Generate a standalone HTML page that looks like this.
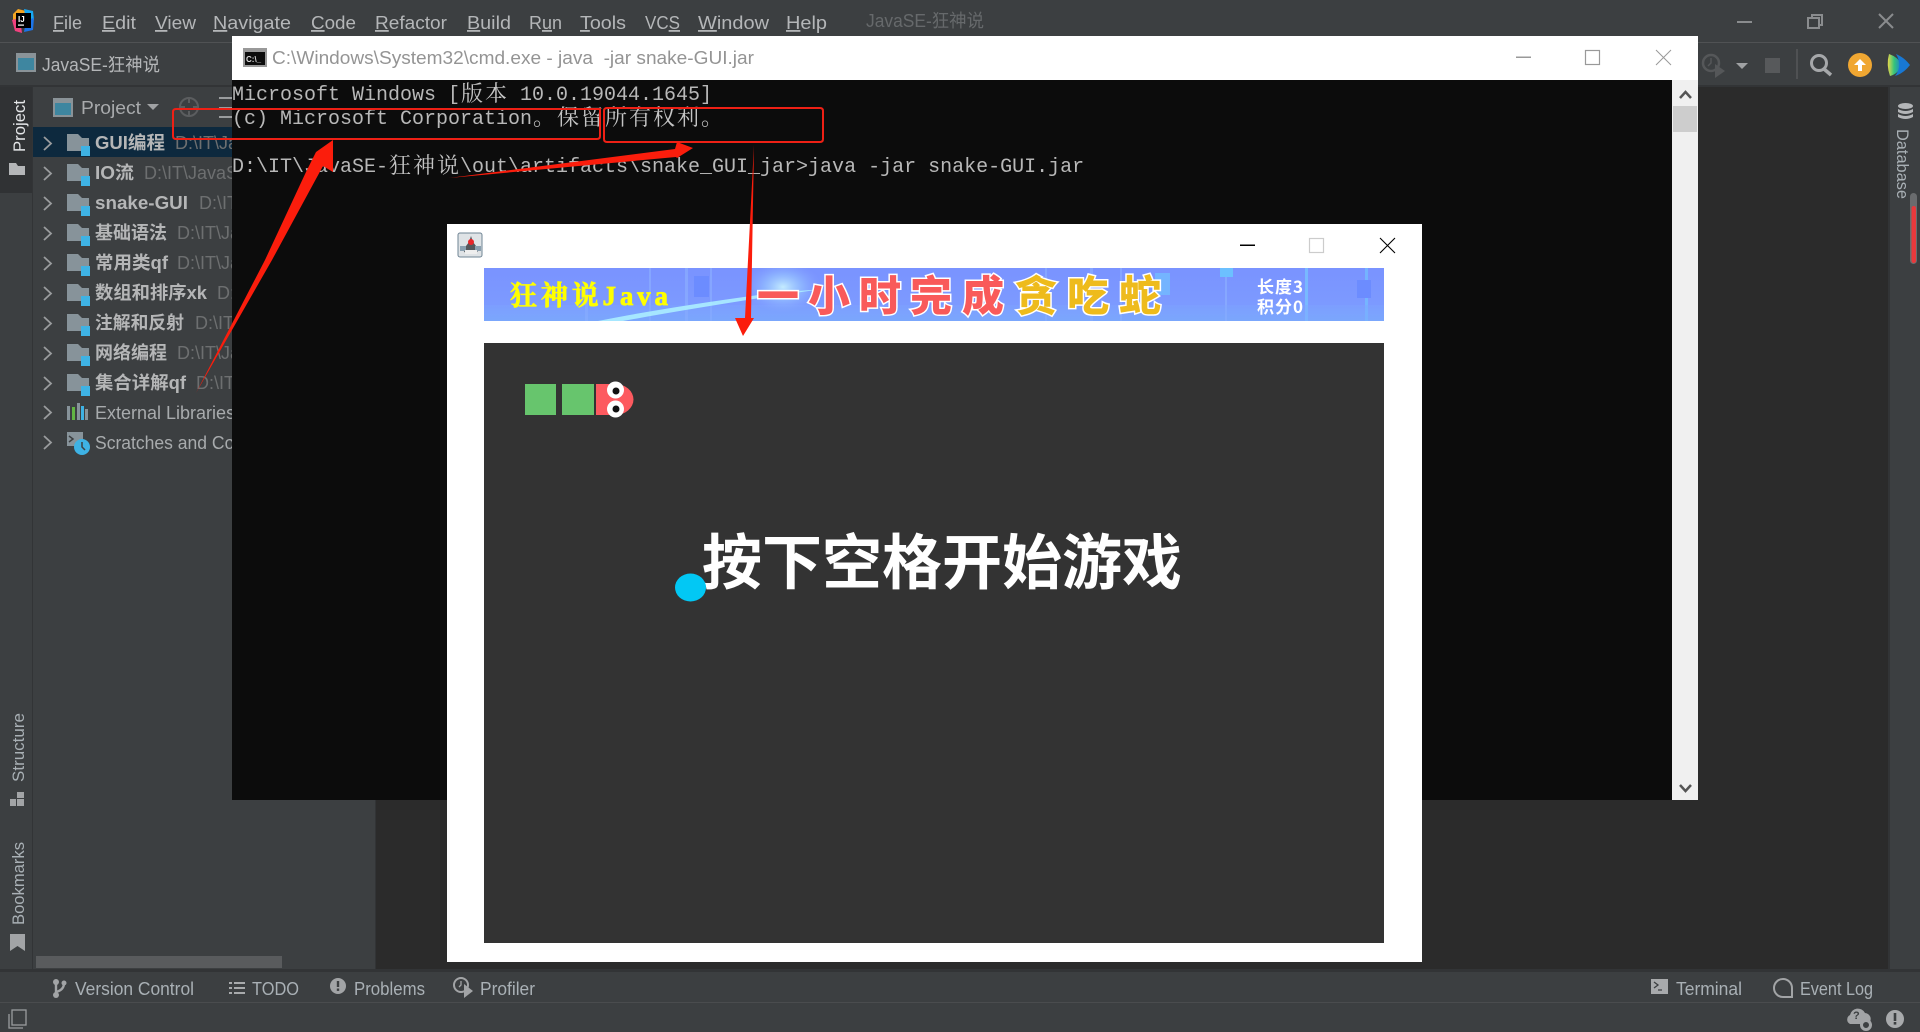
<!DOCTYPE html>
<html><head><meta charset="utf-8"><title>JavaSE</title>
<style>
html,body{margin:0;padding:0;background:#3c3f41;overflow:hidden}
svg{display:block}
text{font-family:"Liberation Sans","Noto Sans CJK SC",sans-serif;white-space:pre}
.m{font-size:18px;fill:#b4b6b8}
.b{font-size:18px;font-weight:700;fill:#b5b6b7}
.p{font-size:18px;fill:#6d6f70}
.t{font-size:18px;fill:#a9b0b5}
.c{font-family:"Liberation Mono","Noto Serif CJK SC",monospace;font-size:20px;fill:#b8b8b8}
.z{font-family:"Noto Serif CJK SC","Liberation Serif",serif;font-size:22px;fill:#c4c4c4}
.y{font-family:"Liberation Serif","Noto Serif CJK SC",serif;font-weight:700;font-size:27px;fill:#ffff00;stroke:#ffff00;stroke-width:.7}
.r{font-family:"Noto Sans CJK SC",sans-serif;font-weight:900;font-size:42px;stroke:#fff;stroke-width:3;paint-order:stroke}
.w{font-family:"Noto Sans CJK SC",sans-serif;font-weight:700;font-size:17px;fill:#fff}
.g{font-family:"Noto Sans CJK SC",sans-serif;font-weight:700;font-size:60px;fill:#fff}
</style></head>
<body>
<svg width="1920" height="1032" viewBox="0 0 1920 1032" xmlns="http://www.w3.org/2000/svg">
<defs>
<g id="f"><path d="M67 -8h11l4 4h7v13H67z" fill="#87939a"/><rect x="81" y="4" width="9" height="10" fill="#3eb2e4"/><path d="M44 -5l7 6.500-7 6.500" fill="none" stroke="#9a9c9e" stroke-width="1.800"/></g>
<g id="pi"><rect x="0" y="0" width="20" height="19" fill="#8a9398"/><rect x="2" y="5" width="16" height="12" fill="#3e86a0"/></g>
<linearGradient id="bn" x1="0" y1="0" x2="0" y2="1"><stop offset="0" stop-color="#7a93ff"/><stop offset=".7" stop-color="#7c9aff"/><stop offset="1" stop-color="#78a8fb"/></linearGradient>
<radialGradient id="gl"><stop offset="0" stop-color="#c8f0ff" stop-opacity=".95"/><stop offset=".5" stop-color="#9fd0ff" stop-opacity=".5"/><stop offset="1" stop-color="#8aa8ff" stop-opacity="0"/></radialGradient>
<linearGradient id="cg" x1="0" y1="0" x2="1" y2="0"><stop offset="0" stop-color="#e8d94a"/><stop offset=".45" stop-color="#35c47a"/><stop offset="1" stop-color="#1678d8"/></linearGradient>
<clipPath id="bc"><rect x="484" y="268" width="900" height="53"/></clipPath>
</defs>

<!-- IDE base -->
<rect width="1920" height="1032" fill="#3c3f41"/>
<rect x="0" y="42" width="1920" height="1" fill="#505254"/>
<rect x="376" y="87" width="1514" height="882" fill="#2b2b2b"/>
<rect x="0" y="85" width="1920" height="2" fill="#323436"/>
<rect x="0" y="87" width="32" height="106" fill="#303234"/>
<rect x="32" y="87" width="1" height="882" fill="#323436"/>
<rect x="375" y="87" width="1" height="882" fill="#323436"/>
<rect x="1888" y="87" width="2" height="882" fill="#323436"/>
<rect x="0" y="969" width="1920" height="3" fill="#323436"/>
<rect x="0" y="1002" width="1920" height="1" fill="#4a4c4e"/>

<!-- Logo -->
<path d="M13 14L18 9 26 11 18 24 13 20z" fill="#f5a623"/>
<path d="M12 20L20 18 22 33 15 31z" fill="#f0417e"/>
<path d="M24 9L33 11 34 20 26 20z" fill="#17a8f3"/>
<path d="M26 20L34 18 33 30 24 32z" fill="#1c74e8"/>
<rect x="16" y="13" width="15" height="15" fill="#000"/>
<text x="18" y="22" style="font-size:8px;font-weight:700;fill:#fff">IJ</text>
<rect x="18" y="24.500" width="6" height="1.200" fill="#fff"/>

<!-- Menu -->
<text class="m" x="53" y="29" textLength="29" lengthAdjust="spacingAndGlyphs"><tspan text-decoration="underline">F</tspan>ile</text>
<text class="m" x="102" y="29" textLength="34" lengthAdjust="spacingAndGlyphs"><tspan text-decoration="underline">E</tspan>dit</text>
<text class="m" x="155" y="29" textLength="41" lengthAdjust="spacingAndGlyphs"><tspan text-decoration="underline">V</tspan>iew</text>
<text class="m" x="213" y="29" textLength="78" lengthAdjust="spacingAndGlyphs"><tspan text-decoration="underline">N</tspan>avigate</text>
<text class="m" x="311" y="29" textLength="45" lengthAdjust="spacingAndGlyphs"><tspan text-decoration="underline">C</tspan>ode</text>
<text class="m" x="375" y="29" textLength="72" lengthAdjust="spacingAndGlyphs"><tspan text-decoration="underline">R</tspan>efactor</text>
<text class="m" x="467" y="29" textLength="44" lengthAdjust="spacingAndGlyphs"><tspan text-decoration="underline">B</tspan>uild</text>
<text class="m" x="529" y="29" textLength="33" lengthAdjust="spacingAndGlyphs">R<tspan text-decoration="underline">u</tspan>n</text>
<text class="m" x="580" y="29" textLength="46" lengthAdjust="spacingAndGlyphs"><tspan text-decoration="underline">T</tspan>ools</text>
<text class="m" x="645" y="29" textLength="35" lengthAdjust="spacingAndGlyphs">VC<tspan text-decoration="underline">S</tspan></text>
<text class="m" x="698" y="29" textLength="71" lengthAdjust="spacingAndGlyphs"><tspan text-decoration="underline">W</tspan>indow</text>
<text class="m" x="786" y="29" textLength="41" lengthAdjust="spacingAndGlyphs"><tspan text-decoration="underline">H</tspan>elp</text>
<text class="m" x="866" y="27" textLength="118" lengthAdjust="spacingAndGlyphs" style="fill:#66696b">JavaSE-狂神说</text>

<!-- Window controls -->
<rect x="1737" y="21" width="15" height="2" fill="#8a8c8e"/>
<path d="M1812 18v-3h10v10h-3M1808 18h11v10h-11z" fill="none" stroke="#8a8c8e" stroke-width="2"/>
<path d="M1879 14l14 14M1893 14l-14 14" stroke="#8a8c8e" stroke-width="2"/>

<!-- Toolbar row -->
<use href="#pi" x="16" y="53"/>
<text class="m" x="42" y="71" textLength="118" lengthAdjust="spacingAndGlyphs">JavaSE-狂神说</text>
<circle cx="1711" cy="63" r="8" fill="none" stroke="#555759" stroke-width="2.500"/>
<path d="M1711 58v5l-3 3" fill="none" stroke="#555759" stroke-width="1.500"/>
<path d="M1715 64l10 7-10 7z" fill="#555759"/>
<path d="M1736 63h12l-6 6z" fill="#a0a2a4"/>
<rect x="1765" y="58" width="15" height="15" fill="#57595b"/>
<rect x="1796" y="49" width="2" height="30" fill="#4f5153"/>
<circle cx="1819" cy="63" r="7.500" fill="none" stroke="#a6a8aa" stroke-width="3"/>
<path d="M1824 69l7 6" stroke="#a6a8aa" stroke-width="3.500"/>
<circle cx="1860" cy="65" r="12" fill="#f0a732"/>
<path d="M1860 59l6 6h-4v6h-4v-6h-4z" fill="#fff"/>
<path d="M1889 54q-3 11 1 22q8-2 12-11q-4-8-13-11z" fill="url(#cg)"/>
<path d="M1896 54q9 4 14 11q-6 8-15 11q8-10 1-22z" fill="#1878d4"/>

<!-- Left rail -->
<text class="t" transform="translate(25,152) rotate(-90)" textLength="52" lengthAdjust="spacingAndGlyphs" style="fill:#e4e6e8;font-size:17px">Project</text>
<path d="M9 163h7l2 3h7v9H9z" fill="#b4b6b8"/>
<text class="t" transform="translate(24,782) rotate(-90)" textLength="69" lengthAdjust="spacingAndGlyphs" style="font-size:17px">Structure</text>
<path d="M10 799h6v7h-6zM17 799h7v7h-7zM17 792h7v6h-7z" fill="#a2a4a6"/>
<text class="t" transform="translate(24,925) rotate(-90)" textLength="83" lengthAdjust="spacingAndGlyphs" style="font-size:17px">Bookmarks</text>
<path d="M10 934h15v17l-7.500-5-7.500 5z" fill="#a2a4a6"/>

<!-- Project panel header -->
<use href="#pi" x="53" y="98"/>
<text class="m" x="81" y="114" textLength="60" lengthAdjust="spacingAndGlyphs" style="fill:#a8aaac">Project</text>
<path d="M147 104h12l-6 6z" fill="#a0a2a4"/>
<circle cx="189" cy="107" r="9" fill="none" stroke="#5b5d5f" stroke-width="2"/>
<path d="M189 97v6M189 111v6M179 107h6M193 107h6" stroke="#5b5d5f" stroke-width="2"/>
<path d="M219 97h13v2h-13zM219 116h13v2h-13zM219 107h13v2h-13z" fill="#9a9c9e"/>

<!-- Tree -->
<rect x="33" y="127" width="343" height="30" fill="#0d293e"/>
<use href="#f" y="142"/><text class="b" x="95" y="149" textLength="70" lengthAdjust="spacingAndGlyphs">GUI编程</text><text class="p" x="175" y="149">D:\IT\JavaSE</text>
<use href="#f" y="172"/><text class="b" x="95" y="179" textLength="39" lengthAdjust="spacingAndGlyphs">IO流</text><text class="p" x="144" y="179">D:\IT\JavaSE</text>
<use href="#f" y="202"/><text class="b" x="95" y="209" textLength="93" lengthAdjust="spacingAndGlyphs">snake-GUI</text><text class="p" x="199" y="209">D:\IT\JavaSE</text>
<use href="#f" y="232"/><text class="b" x="95" y="239" textLength="72" lengthAdjust="spacingAndGlyphs">基础语法</text><text class="p" x="177" y="239">D:\IT\JavaSE</text>
<use href="#f" y="262"/><text class="b" x="95" y="269" textLength="73" lengthAdjust="spacingAndGlyphs">常用类qf</text><text class="p" x="177" y="269">D:\IT\JavaSE</text>
<use href="#f" y="292"/><text class="b" x="95" y="299" textLength="112" lengthAdjust="spacingAndGlyphs">数组和排序xk</text><text class="p" x="217" y="299">D:\IT\JavaSE</text>
<use href="#f" y="322"/><text class="b" x="95" y="329" textLength="89" lengthAdjust="spacingAndGlyphs">注解和反射</text><text class="p" x="195" y="329">D:\IT\JavaSE</text>
<use href="#f" y="352"/><text class="b" x="95" y="359" textLength="72" lengthAdjust="spacingAndGlyphs">网络编程</text><text class="p" x="177" y="359">D:\IT\JavaSE</text>
<use href="#f" y="382"/><text class="b" x="95" y="389" textLength="91" lengthAdjust="spacingAndGlyphs">集合详解qf</text><text class="p" x="196" y="389">D:\IT\JavaSE</text>
<path d="M44 406l7 6.500-7 6.500M44 436l7 6.500-7 6.500" fill="none" stroke="#9a9c9e" stroke-width="1.800"/>
<rect x="67" y="406" width="3" height="14" fill="#87939a"/><rect x="72" y="407" width="3" height="13" fill="#62b543"/><rect x="77" y="403" width="3" height="17" fill="#87939a"/><rect x="81" y="406" width="3" height="14" fill="#3eb2e4"/><rect x="85" y="409" width="3" height="11" fill="#87939a"/>
<text class="m" x="95" y="419" style="fill:#a8abad">External Libraries</text>
<rect x="67" y="432" width="16" height="14" fill="#87939a"/><path d="M69 436l4 3-4 3" fill="none" stroke="#3c3f41" stroke-width="1.500"/>
<circle cx="82" cy="447" r="8" fill="#3eb2e4"/><path d="M82 442v5l3 3" fill="none" stroke="#3c3f41" stroke-width="1.500"/>
<text class="m" x="95" y="449" textLength="190" lengthAdjust="spacingAndGlyphs" style="fill:#a8abad">Scratches and Consoles</text>
<rect x="36" y="956" width="246" height="12" fill="#595b5d"/>

<!-- Right strip -->
<ellipse cx="1905.500" cy="106" rx="7.500" ry="3" fill="#b4b6b8"/>
<path d="M1898 109q7.500 4 15 0v3q-7.500 4-15 0zM1898 114q7.500 4 15 0v3q-7.500 4-15 0z" fill="#b4b6b8"/>
<text class="t" transform="translate(1897,129) rotate(90)" textLength="70" lengthAdjust="spacingAndGlyphs" style="font-size:17px">Database</text>
<rect x="1910" y="193" width="7" height="71" rx="3.500" fill="#6a6c6e"/>
<rect x="1911.500" y="206" width="4.500" height="57" rx="2.200" fill="#e8393c"/>

<!-- Bottom tool bar -->
<circle cx="56" cy="982" r="3" fill="#a2a4a6"/><circle cx="56" cy="995" r="3" fill="#a2a4a6"/><circle cx="64" cy="983" r="2.500" fill="#a2a4a6"/><path d="M56 982v13M64 983q0 7-8 9" fill="none" stroke="#a2a4a6" stroke-width="2.400"/>
<text class="t" x="75" y="995" textLength="119" lengthAdjust="spacingAndGlyphs">Version Control</text>
<path d="M229 982h3v2h-3zM234 982h11v2h-11zM229 987h3v2h-3zM234 987h11v2h-11zM229 992h3v2h-3zM234 992h11v2h-11z" fill="#a8aaac"/>
<text class="t" x="252" y="995" textLength="47" lengthAdjust="spacingAndGlyphs">TODO</text>
<circle cx="338" cy="986" r="8" fill="#a2a4a6"/><rect x="336.800" y="981" width="2.400" height="6" fill="#3c3f41"/><rect x="336.800" y="988.500" width="2.400" height="2.400" fill="#3c3f41"/>
<text class="t" x="354" y="995" textLength="71" lengthAdjust="spacingAndGlyphs">Problems</text>
<circle cx="461" cy="985" r="7" fill="none" stroke="#a2a4a6" stroke-width="2"/>
<path d="M461 981v4l-2 2" fill="none" stroke="#a2a4a6" stroke-width="1.300"/>
<path d="M464 984l9 7-9 7z" fill="#a2a4a6"/>
<text class="t" x="480" y="995" textLength="55" lengthAdjust="spacingAndGlyphs">Profiler</text>
<rect x="1651" y="979" width="17" height="15" fill="#a8aaac"/><path d="M1654 982l4 3-4 3M1658 990h4" fill="none" stroke="#3c3f41" stroke-width="1.300"/>
<text class="t" x="1676" y="995" textLength="66" lengthAdjust="spacingAndGlyphs">Terminal</text>
<path d="M1783 979a9 9 0 1 0 0 18h9v-9a9 9 0 0 0-9-9z" fill="none" stroke="#a2a4a6" stroke-width="2"/>
<text class="t" x="1800" y="995" textLength="73" lengthAdjust="spacingAndGlyphs">Event Log</text>

<!-- Status bar -->
<rect x="12" y="1010" width="14" height="15" fill="none" stroke="#9a9c9e" stroke-width="1.300"/>
<path d="M9 1014v14h14" fill="none" stroke="#9a9c9e" stroke-width="1.300"/>
<path d="M1850 1024a5 5 0 0 1 0-9 8 8 0 0 1 15-2 6 6 0 0 1 3 11z" fill="#a2a4a6"/>
<text x="1853" y="1019" style="font-size:11px;font-weight:700;fill:#3c3f41">?</text>
<circle cx="1866" cy="1025" r="4.500" fill="#3c3f41" stroke="#a2a4a6" stroke-width="3"/>
<circle cx="1895" cy="1019" r="9" fill="#a8aaac"/><rect x="1893.700" y="1013" width="2.600" height="8" fill="#3c3f41"/><rect x="1893.700" y="1022" width="2.600" height="2.600" fill="#3c3f41"/>

<!-- CMD window -->
<rect x="232" y="36" width="1466" height="764" fill="#0c0c0c"/>
<rect x="232" y="36" width="1466" height="44" fill="#fff"/>
<rect x="243" y="48" width="24" height="19" fill="#999"/>
<rect x="245" y="52" width="20" height="13" fill="#0c0c0c"/>
<text x="246" y="62" style="font-size:8px;font-weight:700;fill:#ddd">C:\_</text>
<text x="272" y="64" textLength="482" lengthAdjust="spacingAndGlyphs" style="font-size:18px;fill:#949494">C:\Windows\System32\cmd.exe - java  -jar snake-GUI.jar</text>
<rect x="1516" y="56.500" width="15" height="1.500" fill="#999"/>
<rect x="1585.500" y="50.500" width="14" height="14" fill="none" stroke="#999" stroke-width="1.200"/>
<path d="M1656 50l15 15M1671 50l-15 15" stroke="#999" stroke-width="1"/>
<rect x="1672" y="80" width="26" height="720" fill="#f0f0f0"/>
<path d="M1680 98l5.500-6 5.500 6" fill="none" stroke="#555" stroke-width="2.500"/>
<rect x="1673" y="106" width="24" height="26" fill="#cdcdcd"/>
<path d="M1680 785l5.500 6 5.500-6" fill="none" stroke="#555" stroke-width="2.500"/>

<text class="c" x="232" y="100">Microsoft Windows [</text><text class="z" x="461" y="101">版</text><text class="z" x="485" y="101">本</text><text class="c" x="520" y="100">10.0.19044.1645]</text>
<text class="c" x="232" y="124">(c) Microsoft Corporation</text><text class="z" x="533" y="125">。</text><text class="z" x="557" y="125">保</text><text class="z" x="581" y="125">留</text><text class="z" x="605" y="125">所</text><text class="z" x="629" y="125">有</text><text class="z" x="653" y="125">权</text><text class="z" x="677" y="125">利</text><text class="z" x="701" y="125">。</text>
<text class="c" x="232" y="172">D:\IT\JavaSE-</text><text class="z" x="389" y="173">狂</text><text class="z" x="413" y="173">神</text><text class="z" x="437" y="173">说</text><text class="c" x="460" y="172">\out\artifacts\snake_GUI_jar&gt;java -jar snake-GUI.jar</text>

<!-- Game window -->
<rect x="447" y="224" width="975" height="738" fill="#fff"/>
<rect x="458" y="233" width="24" height="24" rx="2" fill="#dfe3e6" stroke="#6f8494"/>
<path d="M463 250l6-8 2-6 2 6 6 8-4 4h-9z" fill="#55585c"/><path d="M460 246h6v5h-6zM475 246h6v5h-6z" fill="#8aa0b0"/><path d="M465 250h12v4h-12z" fill="#eee"/><circle cx="471" cy="242" r="3" fill="#e8262a"/>
<rect x="1240" y="244.500" width="15" height="1.500" fill="#000"/>
<rect x="1309.500" y="238.500" width="14" height="14" fill="none" stroke="#ccc" stroke-width="1.200"/>
<path d="M1380 238l15 15M1395 238l-15 15" stroke="#000" stroke-width="1.100"/>

<!-- Banner -->
<rect x="484" y="268" width="900" height="53" fill="url(#bn)"/>
<g clip-path="url(#bc)">
<g fill="#8fb4ff" opacity=".55">
<rect x="649" y="268" width="2" height="53"/><rect x="685" y="268" width="3" height="53"/><rect x="710" y="268" width="2" height="53"/><rect x="585" y="290" width="3" height="31"/>
<rect x="1045" y="268" width="2" height="53"/><rect x="1090" y="268" width="3" height="53"/><rect x="1120" y="268" width="2" height="53"/><rect x="1225" y="268" width="2" height="53"/><rect x="1305" y="268" width="3" height="53"/>
</g>
<rect x="1305" y="268" width="3" height="53" fill="#72c0ff" opacity=".7"/>
<rect x="1365" y="268" width="3" height="53" fill="#72c0ff" opacity=".7"/>
<rect x="484" y="305" width="900" height="16" fill="#7fa6ff" opacity=".4"/>
<rect x="694" y="276" width="15" height="21" fill="#6c8cff"/>
<rect x="1155" y="273" width="15" height="22" fill="#74b4ff"/>
<rect x="1220" y="268" width="13" height="9" fill="#6cc0ff"/>
<rect x="1357" y="280" width="14" height="18" fill="#6c8cff"/>
<ellipse cx="783" cy="287" rx="38" ry="26" fill="url(#gl)"/>
<path d="M598 321q70-14 175-28l50-4-50 7q-90 14-150 25z" fill="#aef2ff" opacity=".85"/>
</g>

<text class="y" x="510" y="305" textLength="158" lengthAdjust="spacing">狂神说Java</text>

<text class="r" x="757" y="311" fill="#f95a5a">一</text>
<text class="r" x="808" y="311" fill="#f95a5a">小</text>
<text class="r" x="859" y="311" fill="#f95a5a">时</text>
<text class="r" x="910" y="311" fill="#f95a5a">完</text>
<text class="r" x="962" y="311" fill="#f95a5a">成</text>
<text class="r" x="1015" y="311" fill="#eebb1c">贪</text>
<text class="r" x="1067" y="311" fill="#eebb1c">吃</text>
<text class="r" x="1119" y="311" fill="#eebb1c">蛇</text>
<text class="w" x="1257" y="293" textLength="46" lengthAdjust="spacing">长度3</text>
<text class="w" x="1257" y="313" textLength="46" lengthAdjust="spacing">积分0</text>

<!-- Game panel -->
<rect x="484" y="343" width="900" height="600" fill="#333333"/>
<rect x="525" y="384" width="31" height="31" fill="#67c56d"/>
<rect x="562" y="384" width="32" height="31" fill="#67c56d"/>
<path d="M596 384h19a18.500 15.500 0 0 1 0 31h-19z" fill="#fd5a5f"/>
<circle cx="615.500" cy="390" r="8.500" fill="#fff"/><circle cx="615.500" cy="409" r="8.500" fill="#fff"/>
<circle cx="616" cy="391" r="3.500" fill="#111"/><circle cx="616" cy="409" r="3.500" fill="#111"/>
<text class="g" x="702" y="584" textLength="480" lengthAdjust="spacingAndGlyphs">按下空格开始游戏</text>
<ellipse cx="690.500" cy="587.500" rx="15.500" ry="14" fill="#02c8f4"/>

<!-- Red annotations -->
<g fill="none" stroke="#ee2015" stroke-width="2">
<path d="M176 109H600v27q0 3-3 3H176q-3 0-3-3v-24q0-3 3-3z"/>
<path d="M607 108h213q3 0 3 3v28q0 3-3 3H607q-3 0-3-3v-28q0-3 3-3z"/>
</g>
<g fill="#fb1d0c">
<path d="M196 393L265 260 306 172 316 152 333 140 333 172 323 166 272 260z"/>
<path d="M449 178L675 149 677 142 693 148 677 158 676 157z"/>
<path d="M754 145L745 318 735 318 743 336 754 318 751 318z"/>
</g>
</svg>
</body></html>
